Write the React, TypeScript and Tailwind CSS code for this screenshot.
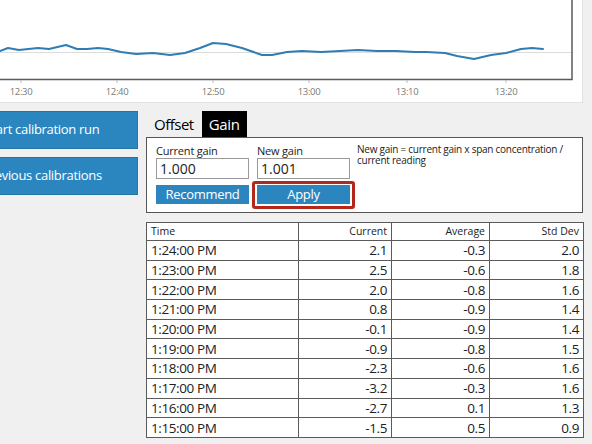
import React from "react";

const points: [number, number][] = [
  [0, 51], [8, 48], [19, 50], [38, 48], [49, 49], [66, 45], [77, 49], [87, 49],
  [98, 48], [108, 49], [121, 52], [136, 54], [153, 53], [170, 55], [185, 53],
  [200, 48], [213, 43], [226, 44], [242, 48], [262, 55], [272, 55], [287, 52],
  [302, 51], [321, 52], [340, 51], [358, 50], [377, 51], [396, 51], [415, 52],
  [426, 52], [445, 53], [457, 56], [474, 59], [491, 55], [506, 53], [521, 49],
  [532, 48], [543, 49],
];

const ticks = [
  { x: 21, label: "12:30" },
  { x: 117, label: "12:40" },
  { x: 213, label: "12:50" },
  { x: 309, label: "13:00" },
  { x: 407, label: "13:10" },
  { x: 506, label: "13:20" },
];

const rows = [
  ["1:24:00 PM", "2.1", "-0.3", "2.0"],
  ["1:23:00 PM", "2.5", "-0.6", "1.8"],
  ["1:22:00 PM", "2.0", "-0.8", "1.6"],
  ["1:21:00 PM", "0.8", "-0.9", "1.4"],
  ["1:20:00 PM", "-0.1", "-0.9", "1.4"],
  ["1:19:00 PM", "-0.9", "-0.8", "1.5"],
  ["1:18:00 PM", "-2.3", "-0.6", "1.6"],
  ["1:17:00 PM", "-3.2", "-0.3", "1.6"],
  ["1:16:00 PM", "-2.7", "0.1", "1.3"],
  ["1:15:00 PM", "-1.5", "0.5", "0.9"],
];

function Chart() {
  return (
    <div className="h-[103px] w-[583px] border-r border-b border-[#e2e2e2] bg-white">
      <svg width="582" height="102" viewBox="0 0 582 102">
        <line x1="0" y1="52.5" x2="572" y2="52.5" stroke="#dcdcdc" strokeWidth="1" />
        <polyline
          points={points.map((p) => p.join(",")).join(" ")}
          fill="none"
          stroke="#2f7db3"
          strokeWidth="2"
          strokeLinejoin="round"
          strokeLinecap="round"
        />
        <line x1="572" y1="0" x2="572" y2="79.5" stroke="#5a5a5a" strokeWidth="1.5" />
        <line x1="0" y1="79.5" x2="572.7" y2="79.5" stroke="#5a5a5a" strokeWidth="1.5" />
        {ticks.map((t) => (
          <g key={t.label}>
            <line x1={t.x} y1="80" x2={t.x} y2="83" stroke="#bbbbbb" strokeWidth="1" />
            <text
              x={t.x}
              y="95"
              textAnchor="middle"
              fontSize="9.5"
              fill="#7a7a7a"
              fontFamily="'Open Sans', 'Noto Sans', sans-serif"
              letterSpacing="-0.3"
            >
              {t.label}
            </text>
          </g>
        ))}
      </svg>
    </div>
  );
}

function SideButton({ label }: { label: string }) {
  return (
    <button className="ml-[-54px] h-[38px] w-[192px] shrink-0 border border-[#2476a8] bg-[#2b86bf] text-center text-[13px] tracking-[-0.3px] text-white">
      {label}
    </button>
  );
}

function GainPanel() {
  return (
    <div className="flex h-[76px] w-[437px] border border-[#555] bg-white pl-[9px] pt-[6px]">
      <div className="flex w-[93px] flex-col">
        <span className="h-[14px] text-[11px] leading-[13px] tracking-[-0.2px] text-[#222]">Current gain</span>
        <div className="flex h-[21px] items-center border border-[#9a9a9a] px-[3px] text-[14px] text-[#222]">1.000</div>
        <button className="mt-[6px] block h-[19px] w-full bg-[#2b86bf] text-[13px] leading-[19px] tracking-[-0.3px] text-white">
          Recommend
        </button>
      </div>
      <div className="ml-[8px] flex w-[93px] flex-col">
        <span className="h-[14px] text-[11px] leading-[13px] tracking-[-0.2px] text-[#222]">New gain</span>
        <div className="flex h-[21px] items-center border border-[#9a9a9a] px-[3px] text-[14px] text-[#222]">1.001</div>
        <div className="relative mt-[6px] h-[19px]">
          <button className="block h-[19px] w-full bg-[#2b86bf] text-[13px] leading-[19px] tracking-[-0.3px] text-white">
            Apply
          </button>
          <span className="absolute -top-[4px] -right-[5px] -bottom-[5px] -left-[5px] rounded-[3px] border-[3px] border-[#b2281c]" />
        </div>
      </div>
      <p className="ml-[7px] w-[218px] text-[10px] leading-[11px] tracking-[-0.25px] text-[#222]">
        New gain = current gain x span concentration / current reading
      </p>
    </div>
  );
}

function DataTable() {
  return (
    <table className="mt-[9px] w-[437px] table-fixed border-collapse bg-white text-[#222]">
      <colgroup>
        <col className="w-[152px]" />
        <col className="w-[93px]" />
        <col className="w-[98px]" />
        <col className="w-[94px]" />
      </colgroup>
      <thead>
        <tr className="h-[18px] text-[10.5px]">
          <th className="border border-[#5a5a5a] px-[4px] text-left font-normal">Time</th>
          <th className="border border-[#5a5a5a] px-[4px] text-right font-normal">Current</th>
          <th className="border border-[#5a5a5a] px-[4px] text-right font-normal">Average</th>
          <th className="border border-[#5a5a5a] px-[4px] text-right font-normal">Std Dev</th>
        </tr>
      </thead>
      <tbody>
        {rows.map((r) => (
          <tr key={r[0]} className="h-[19.7px] text-[13.5px] leading-[18px] tracking-[-0.4px]">
            <td className="border border-[#5a5a5a] px-[4px] text-left">{r[0]}</td>
            <td className="border border-[#5a5a5a] px-[4px] text-right">{r[1]}</td>
            <td className="border border-[#5a5a5a] px-[4px] text-right">{r[2]}</td>
            <td className="border border-[#5a5a5a] px-[4px] text-right">{r[3]}</td>
          </tr>
        ))}
      </tbody>
    </table>
  );
}

export default function App() {
  return (
    <div className="h-[444px] w-[592px] overflow-hidden bg-[#f0f0f0] font-['Open_Sans','Noto_Sans',sans-serif]">
      <Chart />
      <div className="flex pt-[8px]">
        <div className="flex w-[146px] flex-col gap-[8px] overflow-hidden">
          <SideButton label="Start calibration run" />
          <SideButton label="Previous calibrations" />
        </div>
        <div className="flex flex-col">
          <div className="flex h-[26px] items-end text-[15px] leading-[22px] text-black">
            <span className="ml-[8px] h-[24px] pr-[8px] tracking-[-0.5px]">Offset</span>
            <span className="h-[26px] w-[45px] bg-black pt-[2px] text-center tracking-[-0.3px] text-white">Gain</span>
          </div>
          <GainPanel />
          <DataTable />
        </div>
      </div>
    </div>
  );
}
